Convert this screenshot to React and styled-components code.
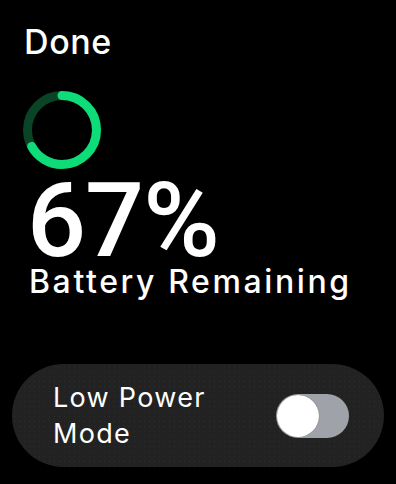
import React from "react";
import styled, { createGlobalStyle } from "styled-components";

const Global = createGlobalStyle`
  html, body {
    margin: 0;
    padding: 0;
    background: #000;
  }
  body {
    font-family: Inter, "Noto Sans", sans-serif;
    color: #fff;
    -webkit-font-smoothing: antialiased;
  }
`;

const Screen = styled.div`
  width: 396px;
  height: 484px;
  background: #000;
  display: flex;
  flex-direction: column;
  overflow: hidden;
`;

const Header = styled.div`
  padding: 24px 0 0 24px;
  font-size: 34px;
  font-weight: 500;
  line-height: 36px;
  letter-spacing: 0.6px;
`;

const RingWrap = styled.div`
  padding: 30px 0 0 22px;
  height: 80px;
`;

const Percent = styled.div`
  margin-top: 8px;
  padding-left: 27px;
  font-family: Roboto, Inter, sans-serif;
  font-size: 104px;
  font-weight: 500;
  line-height: 86px;
  letter-spacing: -1px;
`;

const Caption = styled.div`
  padding-left: 29px;
  font-size: 32px;
  font-weight: 500;
  line-height: 36px;
  letter-spacing: 2.6px;
`;

const Card = styled.div`
  margin: 64px 12px 0 12px;
  height: 103px;
  border-radius: 52px;
  background-color: #222222;
  background-image: radial-gradient(rgba(255, 255, 255, 0.05) 0.6px, transparent 0.8px);
  background-size: 5px 5px;
  display: flex;
  align-items: center;
  justify-content: space-between;
  padding: 0 35px 0 41px;
  box-sizing: border-box;
`;

const Label = styled.div`
  font-size: 27px;
  font-weight: 400;
  line-height: 36px;
  letter-spacing: 1.3px;
`;

const Toggle = styled.div`
  width: 73px;
  height: 44px;
  border-radius: 22px;
  background: ${(p) => (p.on ? "#0ee07a" : "#9fa2a8")};
  display: flex;
  align-items: center;
  justify-content: ${(p) => (p.on ? "flex-end" : "flex-start")};
  padding: 1px;
  box-sizing: border-box;
`;

const Knob = styled.div`
  width: 42px;
  height: 42px;
  border-radius: 50%;
  background: #fff;
  box-shadow: 0 0 1px rgba(0, 0, 0, 0.5);
`;

function Ring({ value }) {
  const r = 34.5;
  const c = 2 * Math.PI * r;
  return (
    <svg width="80" height="80" viewBox="0 0 80 80">
      <circle cx="40" cy="40" r={r} fill="none" stroke="#0a4426" strokeWidth="9" />
      <circle
        cx="40"
        cy="40"
        r={r}
        fill="none"
        stroke="#0ddc78"
        strokeWidth="9"
        strokeLinecap="round"
        strokeDasharray={`${c * value} ${c}`}
        transform="rotate(-90 40 40)"
      />
    </svg>
  );
}

export default function App() {
  return (
    <>
      <Global />
      <Screen>
        <Header>Done</Header>
        <RingWrap>
          <Ring value={0.67} />
        </RingWrap>
        <Percent>67%</Percent>
        <Caption>Battery Remaining</Caption>
        <Card>
          <Label>
            Low Power
            <br />
            Mode
          </Label>
          <Toggle>
            <Knob />
          </Toggle>
        </Card>
      </Screen>
    </>
  );
}
